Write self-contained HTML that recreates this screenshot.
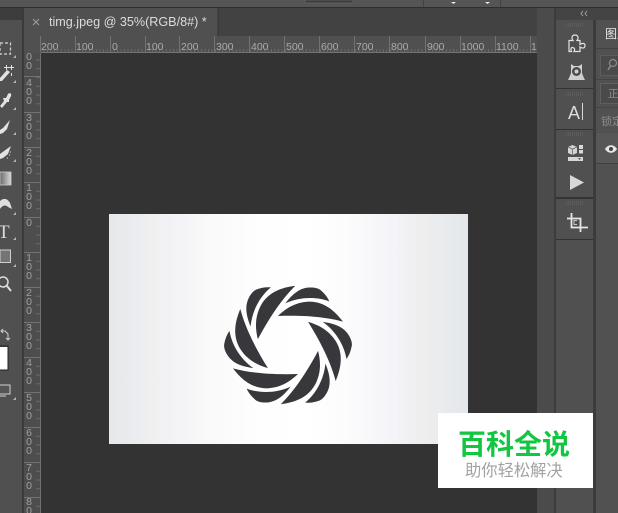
<!DOCTYPE html>
<html><head><meta charset="utf-8">
<style>
html,body{margin:0;padding:0;background:#4f4f4f;width:618px;height:513px;overflow:hidden}
svg{display:block;position:absolute;left:0;top:0}
text{font-family:"Liberation Sans","Noto Sans CJK SC",sans-serif}
.h text{font-size:10.5px;fill:#aaa}
.v text{font-size:10.5px;fill:#a0a0a0;text-anchor:middle}
</style></head><body>
<svg width="618" height="513" viewBox="0 0 618 513" xmlns="http://www.w3.org/2000/svg">
<defs>
<pattern id="hm" x="40" y="0" width="3.5" height="513" patternUnits="userSpaceOnUse"><rect x="0" y="49" width="1" height="3" fill="#696969"/></pattern>
<pattern id="vm" x="0" y="217" width="41" height="8.75" patternUnits="userSpaceOnUse"><rect x="36" y="0" width="4" height="1" fill="#696969"/></pattern>
<linearGradient id="img" x1="0" x2="1" y1="0" y2="0">
<stop offset="0" stop-color="#e6e8ea"/><stop offset=".09" stop-color="#ebedf0"/><stop offset=".12" stop-color="#f1efef"/><stop offset=".19" stop-color="#f3f3f8"/><stop offset=".27" stop-color="#f9f9f9"/><stop offset=".42" stop-color="#fefefe"/><stop offset=".55" stop-color="#ffffff"/><stop offset=".68" stop-color="#fbfbfc"/><stop offset=".8" stop-color="#f3f3f8"/><stop offset=".87" stop-color="#eeeeee"/><stop offset=".94" stop-color="#e8ebee"/><stop offset="1" stop-color="#e3e7eb"/>
</linearGradient>
<linearGradient id="gr" x1="0" x2="1"><stop offset="0" stop-color="#6a6a6a"/><stop offset="1" stop-color="#d8d8d8"/></linearGradient>
<g id="bl"><path d="M-30 -87C-8 -108 20 -128 62 -130C110 -131 142 -100 165 -70C120 -82 60 -90 -30 -87Z"/><path d="M-8 -125C10 -148 30 -168 58 -172C76 -174 88 -171 96 -166C108 -156 118 -145 124 -131C90 -144 40 -147 -8 -125Z"/></g>
</defs>

<!-- base -->
<rect width="618" height="513" fill="#4f4f4f"/>
<rect width="618" height="7" fill="#555"/>
<rect y="7" width="618" height="1" fill="#2e2e2e"/>
<rect x="305" y="0" width="48" height="3" fill="#3c3c3c" stroke="#5e5e5e"/>
<rect x="423" y="0" width="1" height="7" fill="#424242"/><rect x="500" y="0" width="1" height="7" fill="#424242"/>
<path d="M451 2h5l-2.500 2zM485 2h5l-2.500 2z" fill="#eee"/>

<!-- left toolbar -->
<rect y="8" width="22" height="505" fill="#505050"/>
<rect y="8" width="22" height="12" fill="#3d3d3d"/>
<rect x="22" y="8" width="2" height="505" fill="#3a3a3a"/>
<g fill="#e2e2e2" stroke="none">
<rect x="0" y="43" width="10.500" height="11" fill="none" stroke="#d6d6d6" stroke-width="1.200" stroke-dasharray="3 2"/>
<path d="M0 78L7 70L10 72L2 81L0 81Z"/><path d="M6 65h1v2h2v1h-2v2h-1v-2h-2v-1h2zM11 65h1v2h2v1h-2v2h-1v-2h-2v-1h2zM11 73h1v3h-1z"/>
<path d="M0 106L4 101L3 98L6 98L8 94C10 92 12 94 11 96L9 100L9 102L7 102L2 108Z"/>
<path d="M0 134L0 130L3 128L10 120L7 129L3 133Z"/>
<path d="M0 159L0 154L4 151L11 146L8 154L3 158Z"/><path d="M10 151l1 1-1 1zM9 154l1 1-1 1zM7 157l1 1-1 1z"/>
</g>
<path d="M13 58h3v-3zM16 83h-3l3-3zM16 110h-3l3-3zM16 135h-3l3-3zM16 162h-3l3-3zM16 215h-3l3-3zM16 240h-3l3-3zM16 267h-3l3-3zM16 400h-3l3-3z" fill="#b4b4b4"/>
<rect x="0" y="172" width="11" height="13" fill="url(#gr)" stroke="#ccc" stroke-width=".8"/>
<path d="M0 201C4 197 8 199 10 203L12 209L8 207C5 204 2 206 0 209Z" fill="#dedede"/>
<text x="-2" y="238" font-size="19" fill="#dcdcdc" style="font-family:'Liberation Serif',serif">T</text>
<rect x="0" y="250" width="10.500" height="12.500" fill="#747474" stroke="#cfcfcf" stroke-width="1"/>
<circle cx="3" cy="282" r="5" fill="none" stroke="#dedede" stroke-width="1.500"/><path d="M7 286L11 291" stroke="#dedede" stroke-width="2"/>
<path d="M1 331h4l3 3v5M6 338l2 2 2-2M3 329l-2 2 2 2" fill="none" stroke="#d0d0d0" stroke-width="1"/>
<rect x="0" y="347" width="8" height="23" fill="#fff"/>
<rect x="-1" y="346" width="9" height="24" fill="none" stroke="#222" stroke-width="1"/>
<rect x="-2" y="385" width="12" height="9" fill="#555" stroke="#d0d0d0" stroke-width="1"/><path d="M0 396h6" stroke="#d0d0d0"/>

<!-- tab bar -->
<rect x="24" y="8" width="513" height="28" fill="#424242"/>
<rect x="24" y="8" width="193" height="28" fill="#505050"/>
<rect x="218" y="8" width="1" height="28" fill="#3a3a3a"/>
<path d="M33 19L39 25M39 19L33 25" stroke="#a0a0a0" stroke-width="1"/>
<text x="49" y="26" font-size="12.600" fill="#dcdcdc">timg.jpeg @ 35%(RGB/8#) *</text>

<!-- rulers -->
<rect x="24" y="36" width="513" height="17" fill="#505050"/>
<rect x="24" y="53" width="17" height="460" fill="#4d4d4d"/>
<rect x="41" y="52" width="496" height="1" fill="#737373"/>
<rect x="40" y="53" width="1" height="460" fill="#707070"/>
<rect x="41" y="36" width="496" height="16" fill="url(#hm)"/>
<rect x="24" y="53" width="16" height="460" fill="url(#vm)"/>
<path d="M40.500 36v16M75.500 36v16M110.500 36v16M145.500 36v16M179.500 36v16M214.500 36v16M249.500 36v16M284.500 36v16M319.500 36v16M354.500 36v16M389.500 36v16M425.500 36v16M460.500 36v16M495.500 36v16M530.500 36v16" stroke="#727272"/>
<path d="M24 76.500h16M24 112.500h16M24 147.500h16M24 182.500h16M24 217.500h16M24 252.500h16M24 287.500h16M24 322.500h16M24 357.500h16M24 392.500h16M24 427.500h16M24 462.500h16M24 497.500h16" stroke="#727272"/>
<g class="h">
<text x="41" y="50">200</text><text x="76" y="50">100</text><text x="112" y="50">0</text><text x="146" y="50">100</text><text x="181" y="50">200</text><text x="216" y="50">300</text><text x="251" y="50">400</text><text x="286" y="50">500</text><text x="321" y="50">600</text><text x="356" y="50">700</text><text x="391" y="50">800</text><text x="427" y="50">900</text><text x="461" y="50">1000</text><text x="496" y="50">1100</text><text x="531" y="50">1</text>
</g>
<g class="v">
<text x="29" y="60">0</text><text x="29" y="69">0</text>
<text x="29" y="86">4</text><text x="29" y="95">0</text><text x="29" y="104">0</text>
<text x="29" y="121">3</text><text x="29" y="130">0</text><text x="29" y="139">0</text>
<text x="29" y="156">2</text><text x="29" y="165">0</text><text x="29" y="174">0</text>
<text x="29" y="191">1</text><text x="29" y="200">0</text><text x="29" y="209">0</text>
<text x="29" y="226">0</text>
<text x="29" y="261">1</text><text x="29" y="270">0</text><text x="29" y="279">0</text>
<text x="29" y="296">2</text><text x="29" y="305">0</text><text x="29" y="314">0</text>
<text x="29" y="331">3</text><text x="29" y="340">0</text><text x="29" y="349">0</text>
<text x="29" y="366">4</text><text x="29" y="375">0</text><text x="29" y="384">0</text>
<text x="29" y="401">5</text><text x="29" y="410">0</text><text x="29" y="419">0</text>
<text x="29" y="436">6</text><text x="29" y="445">0</text><text x="29" y="454">0</text>
<text x="29" y="471">7</text><text x="29" y="480">0</text><text x="29" y="489">0</text>
<text x="29" y="505">8</text><text x="29" y="514">0</text>
</g>

<!-- canvas -->
<rect x="41" y="53" width="496" height="460" fill="#333"/>
<rect x="109" y="214" width="359" height="230" fill="url(#img)"/>
<g transform="translate(288 345) scale(.3333)" fill="#38383c">
<use href="#bl"/><use href="#bl" transform="rotate(60)"/><use href="#bl" transform="rotate(120)"/><use href="#bl" transform="rotate(180)"/><use href="#bl" transform="rotate(240)"/><use href="#bl" transform="rotate(300)"/>
</g>

<!-- right columns -->
<rect x="537" y="8" width="17" height="505" fill="#4b4b4b"/>
<rect x="554" y="8" width="2" height="505" fill="#3c3c3c"/>
<rect x="556" y="8" width="62" height="505" fill="#505050"/>
<rect x="556" y="8" width="62" height="12" fill="#444"/>
<path d="M583 11l-2 2.500 2 2.500M587 11l-2 2.500 2 2.500" fill="none" stroke="#a0a0a0" stroke-width="1"/>
<rect x="593" y="20" width="3" height="493" fill="#3b3b3b"/>
<rect x="556" y="88" width="37" height="1" fill="#333"/>
<rect x="556" y="129" width="37" height="1" fill="#333"/>
<rect x="556" y="197" width="37" height="2" fill="#333"/>
<rect x="556" y="239" width="37" height="1" fill="#333"/>
<path d="M566 24h18M566 26h18M566 93h18M566 95h18M566 133h18M566 135h18M566 202h18M566 204h18" stroke="#666" stroke-width="1" stroke-dasharray="1 1"/>
<!-- extensions icon -->
<path d="M569 40.500H573C571 38 572 35 575 35C578 35 579 38 577 40.500H580V44.500C583 42.500 585 43.500 585 45.500C585 48 583 49 580 47V51.500H574C575.500 49 574 47.500 572.500 47.500C571 47.500 570.500 49 571.500 51.500H569Z" fill="none" stroke="#e2e2e2" stroke-width="1.200"/>
<!-- owl icon -->
<path d="M571 64L574 66H579L582 64V73C583 76 584 78 585 80H568C569 78 570 76 571 73Z" fill="#cfcfcf"/>
<circle cx="576.500" cy="71.500" r="4.500" fill="#4a4a4a"/><circle cx="576.500" cy="71.500" r="2" fill="#d0d0d0"/>
<!-- A -->
<text x="568" y="119" font-size="18" fill="#dcdcdc">A</text><rect x="582" y="103" width="1" height="17" fill="#d8d8d8"/>
<!-- 3d icon -->
<path d="M568 147L572.500 145L577 147V153L572.500 155L568 153Z" fill="#d4d4d4"/><path d="M572.500 149V155M568 147L572.500 149L577 147" stroke="#666" fill="none" stroke-width=".8"/>
<rect x="579" y="145" width="4" height="4" fill="#d8d8d8"/><rect x="579" y="150" width="4" height="3.500" fill="#d8d8d8"/>
<rect x="568" y="157" width="15" height="4" fill="#d8d8d8"/><path d="M578 158h3l-1.500 2z" fill="#555"/>
<!-- play -->
<path d="M570 175L584 182.500L570 190Z" fill="#d8d8d8"/>
<!-- crop -->
<path d="M567 218.500H580.500V232M571.500 213V227.500H588" fill="none" stroke="#e6e6e6" stroke-width="1.800"/>
<path d="M577 220.500H574V224.500H577" fill="none" stroke="#c8c8c8" stroke-width="1"/>

<!-- layers panel -->
<rect x="596" y="20" width="22" height="493" fill="#515151"/>
<text x="605" y="38" font-size="12" fill="#e6e6e6">图层</text>
<rect x="596" y="48" width="22" height="1" fill="#424242"/>
<rect x="600.500" y="55.500" width="20" height="20" fill="#4a4a4a" stroke="#5c5c5c"/>
<circle cx="613" cy="63" r="3.500" fill="none" stroke="#8a8a8a" stroke-width="1.200"/><path d="M610.500 66L608 70" stroke="#8a8a8a" stroke-width="1.500"/>
<rect x="596" y="79" width="22" height="1" fill="#444"/>
<rect x="600.500" y="83.500" width="20" height="20" fill="#4a4a4a" stroke="#5f5f5f"/>
<text x="608" y="97" font-size="10.500" fill="#8f8f8f">正</text>
<rect x="596" y="107" width="22" height="1" fill="#444"/>
<text x="601" y="125" font-size="11" fill="#8c8c8c">锁定</text>
<rect x="596" y="133" width="22" height="31" fill="#575757"/>
<rect x="596" y="163" width="22" height="1" fill="#3f3f3f"/>
<path d="M605 149C608 144 614 144 617 149C614 154 608 154 605 149Z" fill="#e6e6e6"/><circle cx="611" cy="149" r="2" fill="#444"/>

<!-- watermark -->
<rect x="438" y="413" width="155" height="75" fill="#fff"/>
<text x="458" y="454" font-size="28" font-weight="bold" fill="#12c641" style="font-family:'Noto Sans CJK SC',sans-serif">百科全说</text>
<text x="465" y="476" font-size="16.300" fill="#a2a2a2" style="font-family:'Noto Sans CJK SC',sans-serif">助你轻松解决</text>
</svg>
</body></html>
